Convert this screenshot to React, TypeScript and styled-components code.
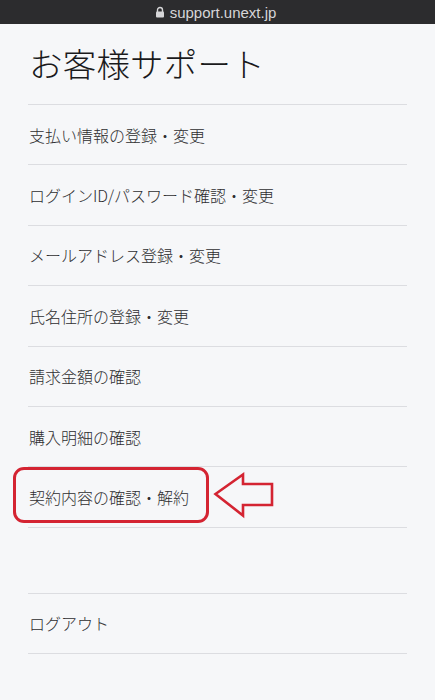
import React from "react";
import styled, { createGlobalStyle } from "styled-components";

const Global = createGlobalStyle`
  html, body { margin: 0; padding: 0; background: #f6f7f9; }
  body { font-family: "Noto Sans CJK JP", "Noto Sans", sans-serif; }
`;

const Page = styled.div`
  width: 435px;
  height: 700px;
  background: #f6f7f9;
  overflow: hidden;
`;

const UrlBar = styled.div`
  height: 24px;
  background: #2c2c2e;
  display: flex;
  align-items: center;
  justify-content: center;
  gap: 5px;
  color: #d6d6d8;
  font-family: "Liberation Sans", Arial, sans-serif;
  font-size: 15px;
  padding-right: 4px;
`;

const Content = styled.div`
  padding: 0 28px;
`;

const Title = styled.h1`
  margin: 0;
  height: 80px;
  display: flex;
  align-items: center;
  padding-left: 1px;
  padding-bottom: 3px;
  box-sizing: border-box;
  font-size: 33.5px;
  font-weight: 300;
  color: #1a1a1c;
  letter-spacing: 0.2px;
`;

const List = styled.div<{ $gap?: number }>`
  display: flex;
  flex-direction: column;
  margin-top: ${(p) => p.$gap ?? 0}px;
  border-bottom: 1px solid #dcdde1;
`;

const Item = styled.div`
  position: relative;
  height: 60.4px;
  box-sizing: border-box;
  border-top: 1px solid #dcdde1;
  display: flex;
  align-items: center;
  font-size: 16px;
  font-weight: 300;
  color: #2e2e30;
  padding-left: 1px;
`;

const Highlight = styled.div`
  position: absolute;
  left: -15px;
  top: 0px;
  width: 196px;
  height: 56px;
  box-sizing: border-box;
  border: 3px solid #d42432;
  border-radius: 11px;
`;

const Arrow = styled.svg`
  position: absolute;
  left: 185px;
  top: 4px;
`;

const Lock = () => (
  <svg width="10" height="12" viewBox="0 0 10 12">
    <path d="M2.5 6V4a2.5 2.5 0 0 1 5 0v2" fill="none" stroke="#d6d6d8" strokeWidth="1.4" />
    <rect x="1" y="5.5" width="8" height="6" rx="1" fill="#d6d6d8" />
  </svg>
);

const items = [
  "支払い情報の登録・変更",
  "ログインID/パスワード確認・変更",
  "メールアドレス登録・変更",
  "氏名住所の登録・変更",
  "請求金額の確認",
  "購入明細の確認",
];

export default function App() {
  return (
    <Page>
      <Global />
      <UrlBar>
        <Lock />
        <span>support.unext.jp</span>
      </UrlBar>
      <Content>
        <Title>お客様サポート</Title>
        <List>
          {items.map((t) => (
            <Item key={t}>{t}</Item>
          ))}
          <Item>
            契約内容の確認・解約
            <Highlight />
            <Arrow width="92" height="50" viewBox="0 0 92 50">
              <path
                d="M2.5 23 L30 3.5 L30 13 L59 13 L59 34 L30 34 L30 44.5 Z"
                fill="none"
                stroke="#d42432"
                strokeWidth="2.6"
                strokeLinejoin="miter"
              />
            </Arrow>
          </Item>
        </List>
        <List $gap={65}>
          <Item>ログアウト</Item>
        </List>
      </Content>
    </Page>
  );
}
